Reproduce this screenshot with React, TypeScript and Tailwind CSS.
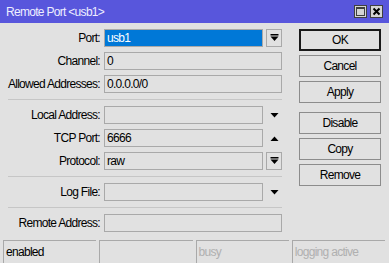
import React from 'react';

const font = { fontFamily: '"Liberation Sans", Arial, sans-serif' };

function ComboIcon() {
  return (
    <svg width="9" height="8" viewBox="0 0 9 8" className="block">
      <rect x="0.5" y="0" width="8" height="1.5" fill="#000" />
      <polygon points="0.5,2.5 8.5,2.5 4.5,7" fill="#000" />
    </svg>
  );
}

function Arrow({ up }: { up?: boolean }) {
  return (
    <svg width="9" height="5" viewBox="0 0 9 5" className="block">
      <polygon points={up ? '0.5,5 8.5,5 4.5,0.5' : '0.5,0 8.5,0 4.5,4.5'} fill="#000" />
    </svg>
  );
}

function Label({ children }: { children: React.ReactNode }) {
  return <div className="w-[100px] shrink-0 text-right text-black leading-none">{children}</div>;
}

function Field({ value, selected }: { value?: string; selected?: boolean }) {
  return (
    <div className="flex-1 h-[18px] border border-[#a9a9a9] bg-[#e1e1e1] flex items-center">
      {selected ? (
        <div className="h-full w-full bg-[#0078d7] text-white pl-[2px] flex items-center leading-none">{value}</div>
      ) : (
        <span className="pl-[2px] text-black leading-none">{value}</span>
      )}
    </div>
  );
}

function Row({ label, children }: { label: string; children: React.ReactNode }) {
  return (
    <div className="flex items-center h-[18px]">
      <Label>{label}</Label>
      <div className="ml-[4px] w-[178px] flex items-center gap-[3px] h-full">{children}</div>
    </div>
  );
}

function Sep() {
  return <div className="ml-[8px] w-[274px] h-px bg-[#c6c6c6] my-[6px]" />;
}

function Btn({ children, primary }: { children: React.ReactNode; primary?: boolean }) {
  return (
    <div
      className={`h-[22px] w-[82px] flex items-center justify-center text-black leading-none ${
        primary ? 'border-2 border-[#1a1a1a]' : 'border border-[#8c8c8c]'
      }`}
    >
      {children}
    </div>
  );
}

export default function App() {
  return (
    <div className="w-[389px] h-[263px] bg-[#e1e1e1] flex flex-col text-[12px] tracking-[-0.7px] overflow-hidden" style={font}>
      {/* title bar */}
      <div className="h-[23px] bg-[#5856dc] flex items-center pl-[6px] pr-[6px]">
        <span className="text-[#eeeeff] text-[12px] flex-1">Remote Port &lt;usb1&gt;</span>
        <div className="flex gap-[3px]">
          <div className="w-[13px] h-[13px] bg-[#d4d4d4] border border-[#404040] flex items-center justify-center">
            <div className="w-[9px] h-[9px] border border-[#404040] border-t-2" />
          </div>
          <div className="w-[13px] h-[13px] bg-[#d4d4d4] border border-[#404040] flex items-center justify-center">
            <svg width="9" height="9" viewBox="0 0 9 9">
              <path d="M1.5 1.5 L7.5 7.5 M7.5 1.5 L1.5 7.5" stroke="#000" strokeWidth="2" />
            </svg>
          </div>
        </div>
      </div>

      {/* body */}
      <div className="flex flex-1 pt-[6px]">
        <div className="flex flex-col w-[299px]">
          <div className="flex flex-col gap-[5px]">
            <Row label="Port:">
              <Field value="usb1" selected />
              <div className="w-[16px] h-[18px] border border-[#a9a9a9] flex items-center justify-center">
                <ComboIcon />
              </div>
            </Row>
            <Row label="Channel:">
              <Field value="0" />
            </Row>
            <Row label="Allowed Addresses:">
              <Field value="0.0.0.0/0" />
            </Row>
          </div>
          <Sep />
          <div className="flex flex-col gap-[5px]">
            <Row label="Local Address:">
              <Field />
              <div className="w-[16px] flex items-center justify-center">
                <Arrow />
              </div>
            </Row>
            <Row label="TCP Port:">
              <Field value="6666" />
              <div className="w-[16px] flex items-center justify-center">
                <Arrow up />
              </div>
            </Row>
            <Row label="Protocol:">
              <Field value="raw" />
              <div className="w-[16px] h-[18px] border border-[#a9a9a9] flex items-center justify-center">
                <ComboIcon />
              </div>
            </Row>
          </div>
          <Sep />
          <Row label="Log File:">
            <Field />
            <div className="w-[16px] flex items-center justify-center">
              <Arrow />
            </div>
          </Row>
          <Sep />
          <Row label="Remote Address:">
            <Field />
          </Row>
        </div>

        <div className="flex flex-col">
          <div className="flex flex-col gap-[4px]">
            <Btn primary>OK</Btn>
            <Btn>Cancel</Btn>
            <Btn>Apply</Btn>
          </div>
          <div className="flex flex-col gap-[4px] mt-[9px]">
            <Btn>Disable</Btn>
            <Btn>Copy</Btn>
            <Btn>Remove</Btn>
          </div>
        </div>
      </div>

      {/* status bar */}
      <div className="h-[23px] grid grid-cols-4 gap-[3px] pl-[3px] pr-[4px]">
        <div className="border-t border-l border-[#a9a9a9] pl-[2px] flex items-center text-black">enabled</div>
        <div className="border-t border-l border-[#a9a9a9]" />
        <div className="border-t border-l border-[#a9a9a9] pl-[2px] flex items-center text-[#b0b0b0]">busy</div>
        <div className="border-t border-l border-[#a9a9a9] pl-[2px] flex items-center text-[#b0b0b0]">logging active</div>
      </div>
    </div>
  );
}
